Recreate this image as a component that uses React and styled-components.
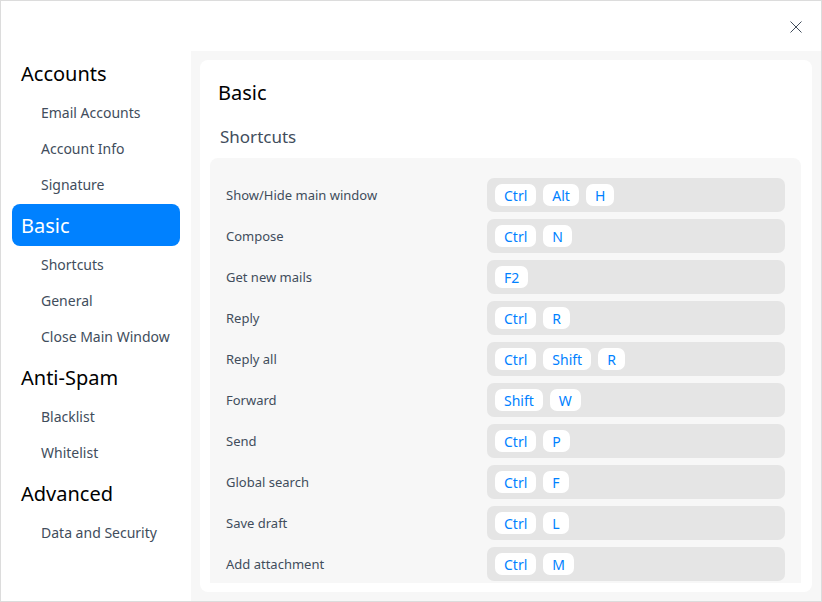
import React from 'react';
import styled, { createGlobalStyle } from 'styled-components';

const GlobalStyle = createGlobalStyle`
    html, body {
        margin: 0;
        padding: 0;
        background: #fff;
    }
    body {
        font-family: "Noto Sans", "Open Sans", sans-serif;
    }
`;

const nav = [
    { title: 'Accounts', items: ['Email Accounts', 'Account Info', 'Signature'] },
    { title: 'Basic', items: ['Shortcuts', 'General', 'Close Main Window'], active: true },
    { title: 'Anti-Spam', items: ['Blacklist', 'Whitelist'] },
    { title: 'Advanced', items: ['Data and Security'] },
];

const shortcuts = [
    ['Show/Hide main window', ['Ctrl', 'Alt', 'H']],
    ['Compose', ['Ctrl', 'N']],
    ['Get new mails', ['F2']],
    ['Reply', ['Ctrl', 'R']],
    ['Reply all', ['Ctrl', 'Shift', 'R']],
    ['Forward', ['Shift', 'W']],
    ['Send', ['Ctrl', 'P']],
    ['Global search', ['Ctrl', 'F']],
    ['Save draft', ['Ctrl', 'L']],
    ['Add attachment', ['Ctrl', 'M']],
];

const App = () => {
    return (
        <React.Fragment>
            <GlobalStyle />
            <Window>
                <TitleBar>
                    <CloseBtn>
                        <svg width="12" height="12" viewBox="0 0 12 12">
                            <path d="M0.5 0.5 L11.5 11.5 M11.5 0.5 L0.5 11.5" stroke="#414d5c" strokeWidth="1" fill="none" />
                        </svg>
                    </CloseBtn>
                </TitleBar>
                <Body>
                    <Sidebar>
                        {nav.map((group) => (
                            <Group key={group.title}>
                                <GroupTitle active={group.active}>{group.title}</GroupTitle>
                                {group.items.map((item) => (
                                    <NavItem key={item}>{item}</NavItem>
                                ))}
                            </Group>
                        ))}
                    </Sidebar>
                    <Content>
                        <Card>
                            <PageTitle>Basic</PageTitle>
                            <SectionTitle>Shortcuts</SectionTitle>
                            <Panel>
                                {shortcuts.map(([label, keys]) => (
                                    <Row key={label}>
                                        <Label>{label}</Label>
                                        <KeyBox>
                                            {keys.map((k) => (
                                                <Key key={k}>{k}</Key>
                                            ))}
                                        </KeyBox>
                                    </Row>
                                ))}
                            </Panel>
                        </Card>
                    </Content>
                </Body>
            </Window>
        </React.Fragment>
    );
};

const Window = styled.div`
    width: 822px;
    height: 602px;
    box-sizing: border-box;
    border: 1px solid #dcdcdc;
    display: flex;
    flex-direction: column;
    background: #fff;
    overflow: hidden;
`;

const TitleBar = styled.div`
    height: 50px;
    display: flex;
    justify-content: flex-end;
    align-items: center;
    padding-right: 19px;
`;

const CloseBtn = styled.div`
    width: 12px;
    height: 12px;
    display: flex;
    margin-top: 1px;
`;

const Body = styled.div`
    flex: 1;
    display: flex;
    min-height: 0;
`;

const Sidebar = styled.div`
    width: 190px;
    box-sizing: border-box;
    padding: 1px 11px 0 11px;
    display: flex;
    flex-direction: column;
`;

const Group = styled.div`
    display: flex;
    flex-direction: column;
    & + & {
        margin-top: 2px;
    }
`;

const GroupTitle = styled.div`
    height: 42px;
    display: flex;
    align-items: center;
    padding-left: 9px;
    border-radius: 8px;
    font-size: 20px;
    color: ${(p) => (p.active ? '#fff' : '#000')};
    background: ${(p) => (p.active ? '#0081ff' : 'transparent')};
`;

const NavItem = styled.div`
    height: 36px;
    display: flex;
    align-items: center;
    padding-left: 29px;
    font-size: 14px;
    color: #414d5c;
`;

const Content = styled.div`
    flex: 1;
    background: #f7f7f7;
    padding: 9px;
    display: flex;
    min-width: 0;
`;

const Card = styled.div`
    flex: 1;
    background: #fff;
    border-radius: 8px;
    padding: 0 11px 9px 10px;
    display: flex;
    flex-direction: column;
    min-height: 0;
    overflow: hidden;
`;

const PageTitle = styled.div`
    font-size: 20px;
    color: #000;
    padding: 19px 0 0 8px;
    line-height: 28px;
`;

const SectionTitle = styled.div`
    font-size: 17px;
    color: #414d5c;
    padding: 18px 0 0 10px;
    line-height: 24px;
`;

const Panel = styled.div`
    margin-top: 9px;
    flex: 1;
    min-height: 0;
    overflow: hidden;
    background: #f7f7f7;
    border-radius: 8px 8px 0 0;
    padding: 20px 16px 0 16px;
    display: flex;
    flex-direction: column;
    gap: 7px;
`;

const Row = styled.div`
    display: flex;
    align-items: center;
    flex-shrink: 0;
`;

const Label = styled.div`
    width: 261px;
    font-size: 13px;
    color: #414d5c;
`;

const KeyBox = styled.div`
    flex: 1;
    height: 34px;
    box-sizing: border-box;
    background: #e5e5e5;
    border-radius: 7px;
    padding: 0 8px;
    display: flex;
    align-items: center;
    gap: 7px;
`;

const Key = styled.div`
    height: 22px;
    padding: 0 9px;
    background: #fff;
    border-radius: 7px;
    display: flex;
    align-items: center;
    font-size: 14px;
    color: #0081ff;
`;

export default App;
